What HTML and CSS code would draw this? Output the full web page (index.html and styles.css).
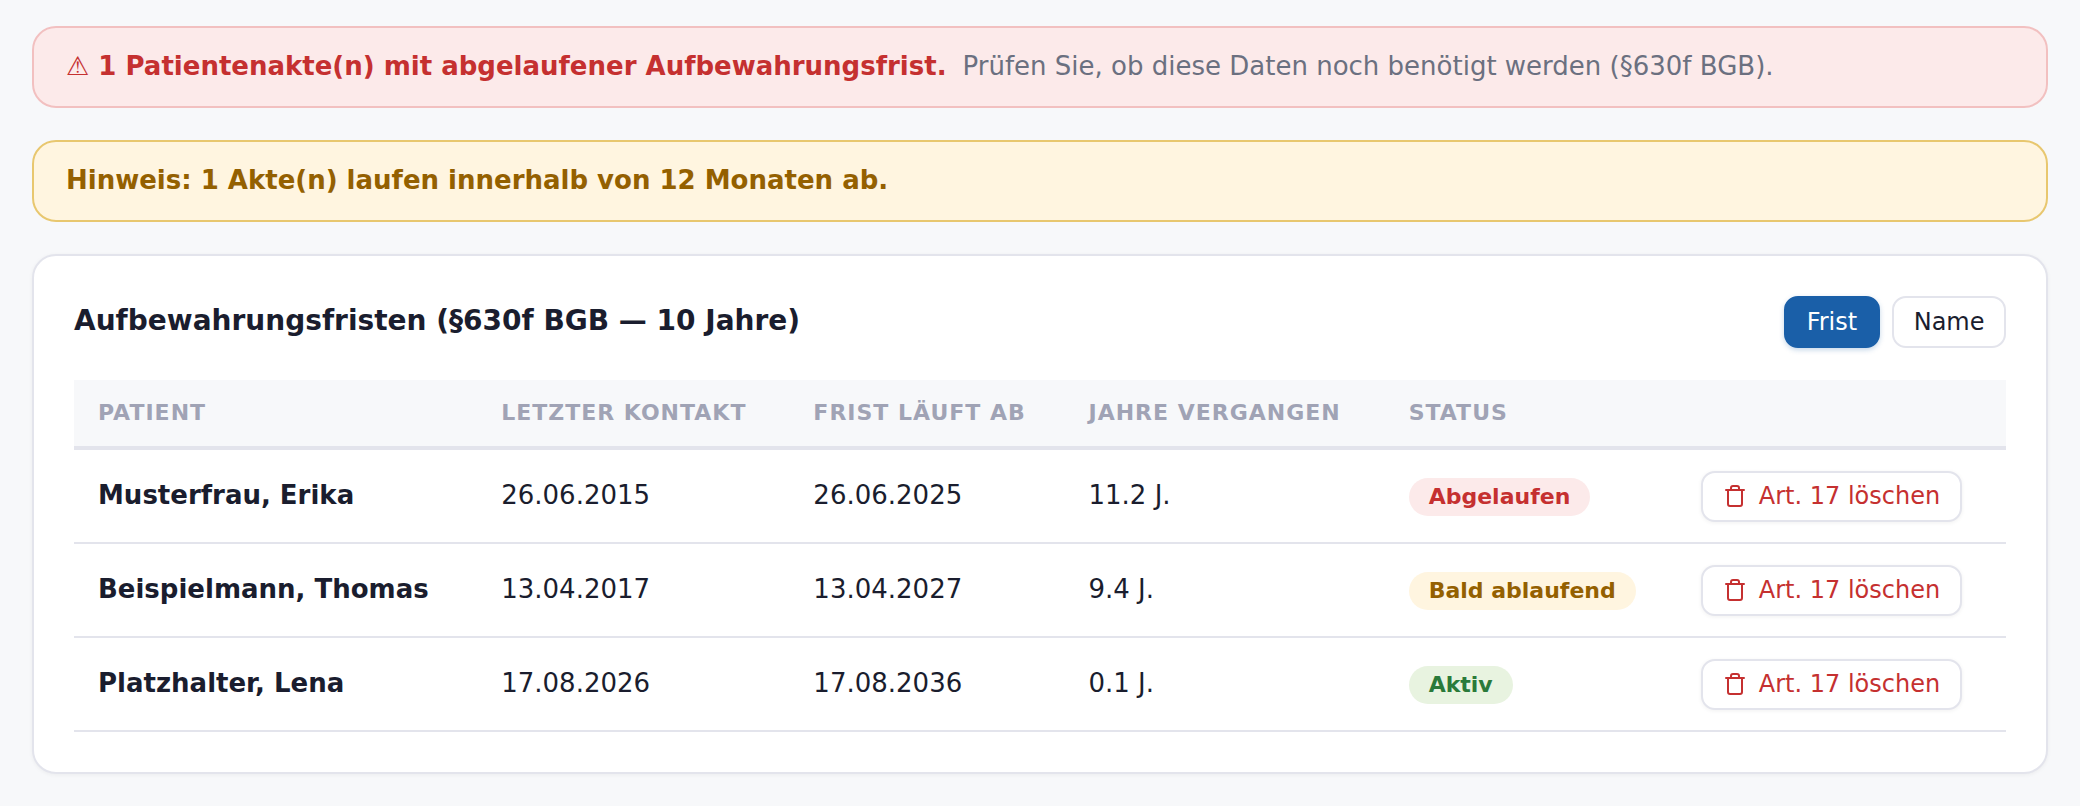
FILE: index.html
```html
<!DOCTYPE html>
<html lang="de">
<head>
  <meta charset="UTF-8" />
  <title>Aufbewahrungsfristen</title>
  <link rel="stylesheet" href="styles.css">
</head>
<body>
  <div class="alert alert-red">
    <strong>⚠ 1 Patientenakte(n) mit abgelaufener Aufbewahrungsfrist.</strong>
    <span class="alert-note">Prüfen Sie, ob diese Daten noch benötigt werden (§630f BGB).</span>
  </div>

  <div class="alert alert-yellow">
    <strong>Hinweis: 1 Akte(n) laufen innerhalb von 12 Monaten ab.</strong>
  </div>

  <div class="card">
    <div class="card-head">
      <h2>Aufbewahrungsfristen (§630f BGB — 10 Jahre)</h2>
      <div class="sort-group">
        <button class="sort-btn sort-active">Frist</button>
        <button class="sort-btn">Name</button>
      </div>
    </div>

    <table>
      <thead>
        <tr>
          <th class="col-name">Patient</th>
          <th class="col-contact">Letzter Kontakt</th>
          <th class="col-due">Frist läuft ab</th>
          <th class="col-years">Jahre vergangen</th>
          <th class="col-status">Status</th>
          <th class="col-action"></th>
        </tr>
      </thead>
      <tbody>
        <tr>
          <td class="name">Musterfrau, Erika</td>
          <td>26.06.2015</td>
          <td>26.06.2025</td>
          <td>11.2 J.</td>
          <td><span class="badge badge-red">Abgelaufen</span></td>
          <td>
            <button class="delete-btn">
              <svg class="trash" viewBox="0 0 24 24"><path d="M3 6h18M19 6v14a2 2 0 0 1-2 2H7a2 2 0 0 1-2-2V6m3 0V4a2 2 0 0 1 2-2h4a2 2 0 0 1 2 2v2"/></svg>
              Art. 17 löschen
            </button>
          </td>
        </tr>
        <tr>
          <td class="name">Beispielmann, Thomas</td>
          <td>13.04.2017</td>
          <td>13.04.2027</td>
          <td>9.4 J.</td>
          <td><span class="badge badge-yellow">Bald ablaufend</span></td>
          <td>
            <button class="delete-btn">
              <svg class="trash" viewBox="0 0 24 24"><path d="M3 6h18M19 6v14a2 2 0 0 1-2 2H7a2 2 0 0 1-2-2V6m3 0V4a2 2 0 0 1 2-2h4a2 2 0 0 1 2 2v2"/></svg>
              Art. 17 löschen
            </button>
          </td>
        </tr>
        <tr>
          <td class="name">Platzhalter, Lena</td>
          <td>17.08.2026</td>
          <td>17.08.2036</td>
          <td>0.1 J.</td>
          <td><span class="badge badge-green">Aktiv</span></td>
          <td>
            <button class="delete-btn">
              <svg class="trash" viewBox="0 0 24 24"><path d="M3 6h18M19 6v14a2 2 0 0 1-2 2H7a2 2 0 0 1-2-2V6m3 0V4a2 2 0 0 1 2-2h4a2 2 0 0 1 2 2v2"/></svg>
              Art. 17 löschen
            </button>
          </td>
        </tr>
      </tbody>
    </table>
  </div>
</body>
</html>
```

FILE: styles.css
```css
body {
  margin: 0;
  padding: 26px 32px;
  background-color: #f7f8fa;
  color: #1a1d2e;
  font-family: "DejaVu Sans", sans-serif;
  font-size: 26px;
}
.alert {
  height: 82px;
  box-sizing: border-box;
  display: flex;
  align-items: center;
  gap: 16px;
  padding: 0 32px 3px;
  margin-bottom: 32px;
  border: 2px solid;
  border-radius: 24px;
}
.alert-red {
  background-color: #fceaea;
  border-color: #f2c0c0;
  color: #c53030;
}
.alert-yellow {
  background-color: #fff5e0;
  border-color: #e8c76f;
  color: #946000;
}
.alert-note {
  color: #6b7080;
}
.card {
  box-sizing: border-box;
  height: 520px;
  padding: 40px;
  background: white;
  border: 2px solid #e3e4ec;
  border-radius: 24px;
  box-shadow: 0 1px 4px rgba(0,0,0,0.05);
}
.card-head {
  display: flex;
  justify-content: space-between;
  align-items: center;
  margin-bottom: 32px;
}
.card-head h2 {
  margin: 0 0 3px;
  font-size: 28px;
}
.sort-group {
  display: flex;
  gap: 12px;
}
.sort-btn {
  height: 52px;
  padding: 0 19.5px;
  font-family: inherit;
  font-size: 24px;
  color: #1a1d2e;
  background: white;
  border: 2px solid #e3e4ec;
  border-radius: 14px;
}
.sort-active {
  padding: 0 21px;
  background-color: #1a5fa8;
  border-color: #1a5fa8;
  color: white;
  box-shadow: 0 2px 5px rgba(26,95,168,0.25);
}
table {
  width: 100%;
  border-collapse: collapse;
  table-layout: fixed;
}
th {
  box-sizing: border-box;
  height: 68px;
  padding: 0 24px 1px;
  background-color: #f7f8fa;
  border-bottom: 4px solid #e3e4ec;
  color: #a0a3b5;
  font-size: 22px;
  letter-spacing: 1px;
  text-align: left;
  text-transform: uppercase;
}
.col-name { width: 403px; }
.col-contact { width: 312px; }
.col-due { width: 275px; }
.col-years { width: 320px; }
.col-status { width: 292px; }
.col-action { width: 329px; }
td {
  height: 90px;
  padding: 0 24px 2px;
  border-bottom: 2px solid #e3e4ec;
}
.name {
  font-weight: bold;
}
.badge {
  display: inline-block;
  margin-top: 4px;
  padding: 0 20px;
  line-height: 38px;
  border-radius: 19px;
  font-size: 22px;
  font-weight: bold;
}
.badge-red {
  background-color: #fceaea;
  color: #c53030;
}
.badge-yellow {
  background-color: #fff5e0;
  color: #946000;
}
.badge-green {
  background-color: #e8f3e0;
  color: #2a7a3a;
}
.delete-btn {
  display: flex;
  align-items: center;
  gap: 12px;
  height: 51px;
  margin-top: 2px;
  padding: 0 20px;
  font-family: inherit;
  font-size: 24px;
  white-space: nowrap;
  color: #c53030;
  background: white;
  border: 2px solid #e3e4ec;
  border-radius: 14px;
  box-shadow: 0 1px 4px rgba(0,0,0,0.06);
}
.trash {
  width: 24px;
  height: 24px;
  fill: none;
  stroke: #c53030;
  stroke-width: 2;
  stroke-linecap: round;
  stroke-linejoin: round;
}
```
